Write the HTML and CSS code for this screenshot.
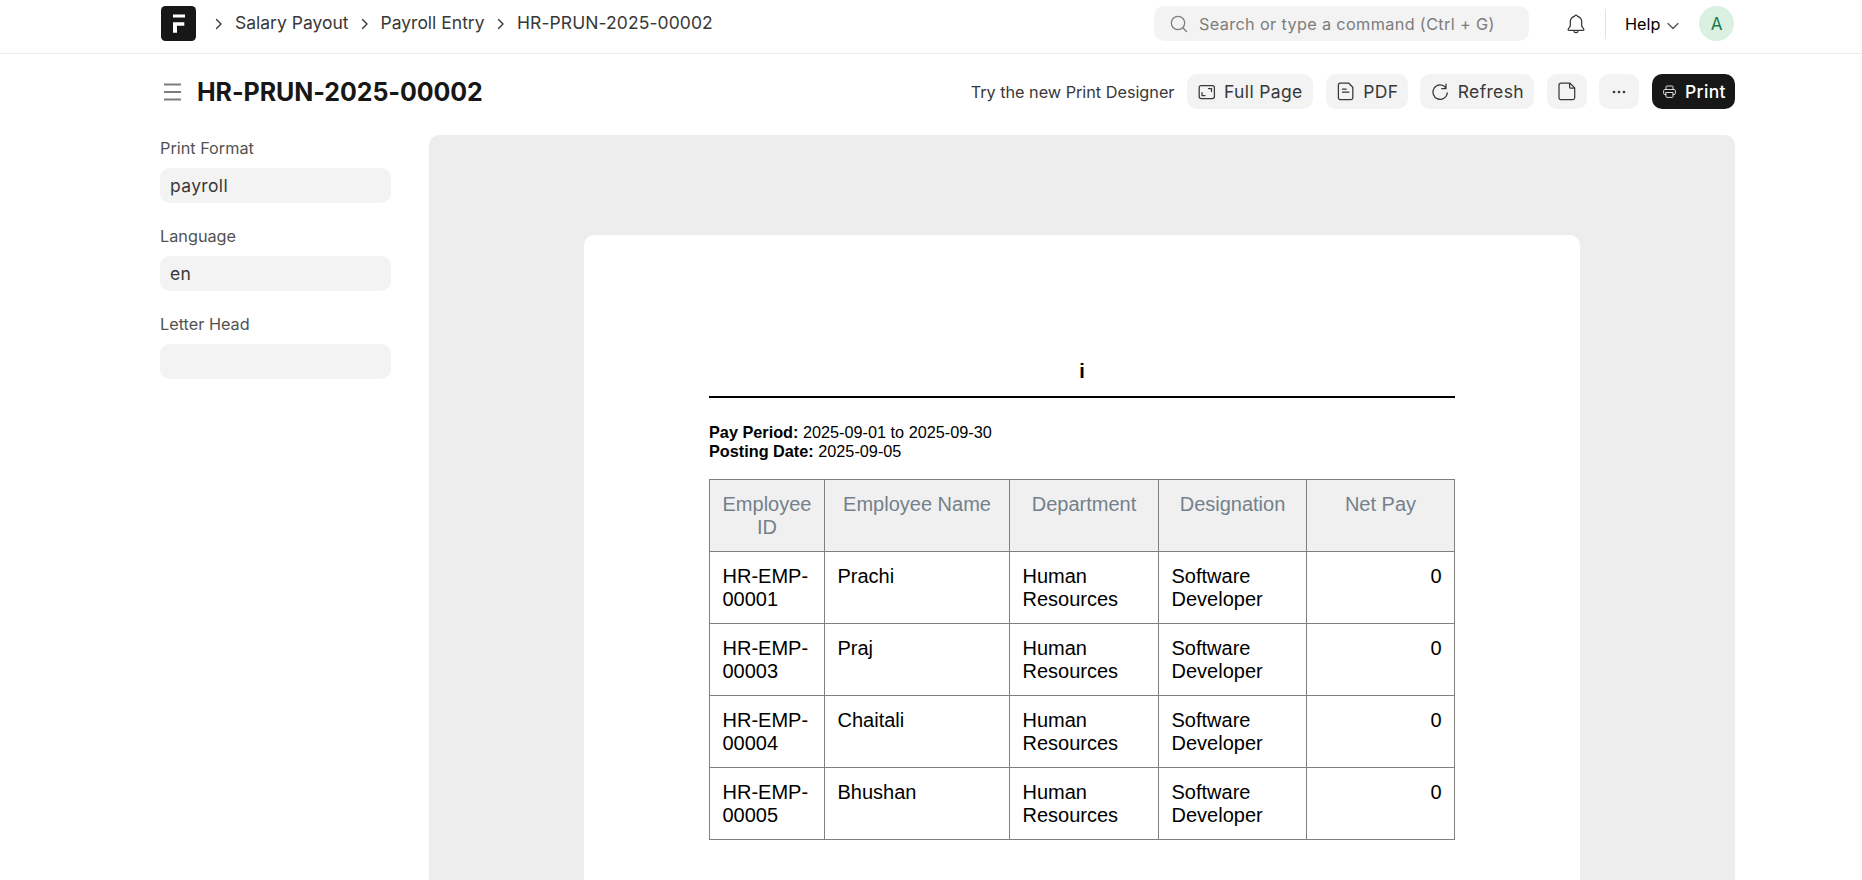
FILE: index.html
```
<!DOCTYPE html>
<html lang="en">
<head>
<meta charset="utf-8">
<title>HR-PRUN-2025-00002</title>
<link rel="stylesheet" href="styles.css">
</head>
<body>
<header class="navbar">
  <div class="container nav-inner">
    <svg class="logo" viewBox="0 0 35 35"><rect width="35" height="35" rx="4.5" fill="#171717"/><path d="M12 8.500h12v3H12zM12 16.300h11.300v3.400h-7.300v7H12z" fill="#fff"/></svg>
    <nav class="crumbs">
      <svg class="sep" viewBox="0 0 8 12"><path d="M1.500 1.500 6 6l-4.500 4.500"/></svg><a class="c1">Salary Payout</a>
      <svg class="sep" viewBox="0 0 8 12"><path d="M1.500 1.500 6 6l-4.500 4.500"/></svg><a class="c2">Payroll Entry</a>
      <svg class="sep" viewBox="0 0 8 12"><path d="M1.500 1.500 6 6l-4.500 4.500"/></svg><a class="c3">HR-PRUN-2025-00002</a>
    </nav>
    <div class="search">
      <svg width="18" height="18" viewBox="0 0 18 18"><circle cx="8" cy="8" r="6.700"/><path d="m12.800 12.800 3.700 3.700"/></svg>
      <span>Search or type a command (Ctrl + G)</span>
    </div>
    <svg class="bell" width="18" height="20" viewBox="0 0 18 20"><path d="M9 1c-.8 0-1.400.6-1.500 1.300C5 3 3.300 5.200 3.300 7.800v4.400L1.300 15c-.4.700-.1 1.300.6 1.300h14.200c.7 0 1-.6.600-1.300l-2-2.800V7.800c0-2.600-1.700-4.800-4.200-5.500C10.400 1.600 9.800 1 9 1zM6.600 16.500c.3 1.500 1.200 2.200 2.400 2.200s2.100-.7 2.400-2.200"/></svg>
    <div class="vline"></div>
    <div class="help">Help</div>
    <svg class="chev" width="12" height="8" viewBox="0 0 12 8"><path d="m1 1.500 5 5 5-5"/></svg>
    <div class="avatar">A</div>
  </div>
</header>
<section class="container page-head">
  <svg class="menu" width="17" height="18" viewBox="0 0 17 18"><path d="M0 1.500h17M0 9h17M0 16.500h17"/></svg>
  <h1 class="title">HR-PRUN-2025-00002</h1>
  <div class="actions">
    <a class="designer">Try the new Print Designer</a>
    <button class="btn full"><svg width="18" height="16" viewBox="0 0 18 16"><rect x="1.200" y="1.500" width="15.200" height="13" rx="2"/><path d="M10.500 4.500h3v3M7 11.500H4v-3"/></svg><span>Full Page</span></button>
    <button class="btn pdf"><svg width="17" height="19" viewBox="0 0 17 19"><path d="M3.200 1.200h8.600l4 4v10.500c0 1.100-.7 1.800-1.800 1.800H3.200c-1.100 0-1.800-.7-1.800-1.800V3c0-1.100.7-1.800 1.800-1.800zM5.500 7.200h3.700M5.500 10.200h6.300"/></svg><span>PDF</span></button>
    <button class="btn refresh"><svg width="18" height="18" viewBox="0 0 18 18"><path d="M16.300 9.800A7.200 7.200 0 1 1 14.700 4.600M15 1v4.500h-4.300"/></svg><span>Refresh</span></button>
    <button class="btn icon"><svg width="18" height="19" viewBox="0 0 18 19"><path d="M2.800 1.200h9.200l4.700 4.700v9.900c0 1.100-.7 1.800-1.800 1.800H2.800c-1.100 0-1.800-.7-1.800-1.800V3c0-1.100.7-1.800 1.800-1.800zM11.600 1.200v3.700c0 .8.500 1.300 1.300 1.300h3.700"/></svg></button>
    <button class="btn icon"><svg class="dots" width="14" height="4" viewBox="0 0 14 4"><circle cx="2" cy="2" r="1.350"/><circle cx="7" cy="2" r="1.350"/><circle cx="12" cy="2" r="1.350"/></svg></button>
    <button class="btn print"><svg width="13" height="13" viewBox="0 0 13 13"><path d="M3 4.500V1.800c0-.5.300-.8.800-.8h5.400c.5 0 .8.300.8.800v2.700M3 9.500H1.800c-.7 0-1.200-.5-1.200-1.200V5.700c0-.7.500-1.200 1.200-1.200h9.400c.7 0 1.200.5 1.200 1.200v2.600c0 .7-.5 1.200-1.200 1.200H10M3 7.500h7v4.200c0 .4-.3.700-.7.700H3.700c-.4 0-.7-.3-.7-.7z"/></svg><span>Print</span></button>
  </div>
</section>
<main class="container body">
  <aside class="sidebar">
    <label class="label">Print Format</label><div class="field">payroll</div>
    <label class="label">Language</label><div class="field">en</div>
    <label class="label">Letter Head</label><div class="field"></div>
  </aside>
  <div class="preview">
    <article class="paper">
      <h2 class="doc-title">i</h2>
      <p class="meta"><b>Pay Period:</b> 2025-09-01 to 2025-09-30<br><b>Posting Date:</b> 2025-09-05</p>
      <table class="grid">
        <colgroup><col class="w-id"><col class="w-name"><col class="w-dep"><col class="w-des"><col class="w-pay"></colgroup>
        <thead><tr><th>Employee ID</th><th>Employee Name</th><th>Department</th><th>Designation</th><th>Net Pay</th></tr></thead>
        <tbody>
          <tr><td>HR-EMP-00001</td><td>Prachi</td><td>Human Resources</td><td>Software Developer</td><td class="num">0</td></tr>
          <tr><td>HR-EMP-00003</td><td>Praj</td><td>Human Resources</td><td>Software Developer</td><td class="num">0</td></tr>
          <tr><td>HR-EMP-00004</td><td>Chaitali</td><td>Human Resources</td><td>Software Developer</td><td class="num">0</td></tr>
          <tr><td>HR-EMP-00005</td><td>Bhushan</td><td>Human Resources</td><td>Software Developer</td><td class="num">0</td></tr>
        </tbody>
      </table>
    </article>
  </div>
</main>
</body>
</html>
```
FILE: styles.css
```
* { box-sizing: border-box; }
body {
  margin: 0;
  height: 880px;
  overflow: hidden;
  background: #fff;
  color: #383838;
  font-family: Inter, "Liberation Sans", sans-serif;
  font-size: 17.5px;
  display: flex;
  flex-direction: column;
}
svg { fill: none; stroke: #383838; stroke-width: 1.25; stroke-linecap: round; stroke-linejoin: round; flex: none; display: block; }
.container { width: 1575px; margin-left: 160px; display: flex; }

.navbar { height: 54px; border-bottom: 1px solid #ededed; flex: none; }
.nav-inner { height: 47px; align-items: center; }
.logo { width: 35px; height: 35px; margin-left: 1px; stroke: none; }
.crumbs { display: flex; align-items: center; margin-left: 19px; font-size: 17.5px; white-space: nowrap; }
.crumbs a { line-height: 20px; padding-bottom: 2px; }
.crumbs .c3 { letter-spacing: 0.08px; }
.sep { width: 8px; height: 12px; margin-right: 12px; stroke-width: 1.4; }
.c1 { width: 125.500px; }
.c2 { width: 116.500px; }
.search {
  margin-left: auto; width: 375px; height: 35px; border-radius: 10px; background: #f3f3f3; flex: none;
  display: flex; align-items: center; padding-left: 16px; gap: 11px;
  color: #7c7c7c; font-size: 16.25px; letter-spacing: 0.35px; white-space: nowrap;
}
.search svg { stroke: #7c7c7c; }
.bell { margin-left: 38px; }
.vline { width: 1px; height: 30px; background: #e2e2e2; margin-left: 20px; }
.help { margin-left: 19px; width: 42px; color: #000; font-size: 16.25px; padding-top: 1px; }
.chev { stroke: #525252; margin-top: 4px; }
.avatar { width: 35px; height: 35px; margin: 0 1px 0 20px; border-radius: 50%; background: #daf0e1; color: #16794c; font-size: 17px; display: flex; align-items: center; justify-content: center; flex: none; }

.page-head { height: 75px; align-items: center; flex: none; }
.menu { margin-left: 4px; stroke: #7c7c7c; stroke-width: 1.8; stroke-linecap: butt; }
.title { margin: 0 0 0 16px; font-size: 25px; font-weight: 700; line-height: 32px; color: #171717; white-space: nowrap; letter-spacing: -0.08px; }
.actions { margin-left: auto; display: flex; align-items: center; gap: 12.600px; }
.designer { font-size: 16.25px; white-space: nowrap; letter-spacing: -0.02px; }
.btn {
  height: 35px; border: 0; border-radius: 10px; background: #f3f3f3; color: #383838; padding: 0; flex: none;
  font: inherit; letter-spacing: 0.35px; display: flex; align-items: center; white-space: nowrap;
}
.full { width: 126px; padding-left: 11px; gap: 8px; }
.pdf { width: 82px; padding-left: 11px; gap: 9.500px; }
.refresh { width: 114px; padding-left: 11px; gap: 8.500px; }
.icon { width: 40px; justify-content: center; }
.icon .dots { fill: #383838; stroke: none; }
.print { width: 83px; padding-left: 11px; gap: 9px; background: #171717; color: #fff; font-weight: 500; }
.print svg { stroke: #ededed; stroke-width: 0.9; }

.body { margin-top: 6px; flex: 1; min-height: 0; }
.sidebar { width: 231px; flex: none; }
.label { display: block; margin: 3px 0 10px; height: 20px; font-size: 16.25px; line-height: 20px; color: #525252; }
.field { height: 35px; margin-bottom: 23px; padding-left: 10px; border-radius: 10px; background: #f3f3f3; line-height: 35px; letter-spacing: 0.35px; }
.label:not(:first-child) { margin-top: 23px; }
.preview { margin-left: 38px; width: 1306px; background: #ededed; border-radius: 10px 10px 0 0; padding-top: 100px; }
.paper {
  width: 996px; height: 645px; margin-left: 155px; padding: 121px 125px 0; border-radius: 10px 10px 0 0; background: #fff; color: #000;
  font-family: "Liberation Sans", Arial, sans-serif;
}
.doc-title { margin: 0 0 25px; height: 42px; border-bottom: 2px solid #000; text-align: center; font-size: 20px; line-height: 30px; }
.meta { margin: 0 0 18px; height: 38px; font-size: 16.25px; line-height: 19px; }
.grid { border-collapse: collapse; table-layout: fixed; width: 746px; font-size: 20px; line-height: 23px; }
.w-id { width: 115px; } .w-name { width: 185px; } .w-dep { width: 149px; } .w-des { width: 148px; } .w-pay { width: 148px; }
.grid th, .grid td { height: 72px; padding: 12.500px; border: 1px solid #808080; vertical-align: top; text-align: left; }
.grid th { background: #f0f0f0; color: #74808b; font-weight: 400; text-align: center; }
.grid .num { text-align: right; }
```
